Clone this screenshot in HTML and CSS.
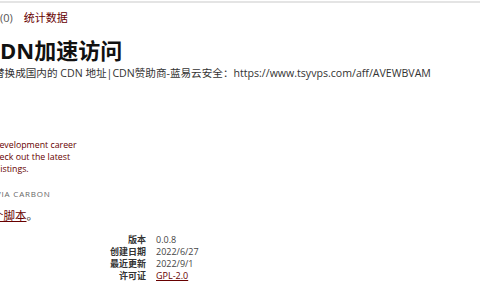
FILE: index.html
```html
<!DOCTYPE html>
<html lang="zh-CN">
<head>
<meta charset="utf-8">
<link rel="stylesheet" href="styles.css">
</head>
<body>
<div class="topbar"></div>
<div class="tabs"><span class="count">(0)</span><a class="tab" href="#">统计数据</a></div>
<div class="page">
  <h2 class="title">CDN加速访问</h2>
  <p class="desc">替换成国内的 CDN 地址|CDN赞助商-蓝易云安全：https://www.tsyvps.com/aff/AVEWBVAM</p>
  <div class="ad">
    <p class="ad-text"><span class="ad-line">development career</span><span class="ad-line ad-line-2">check out the latest</span><span class="ad-line ad-line-3">listings.</span></p>
    <p class="ad-via">VIA CARBON</p>
  </div>
  <p class="note"><a href="#">个脚本</a>。</p>
  <dl class="meta">
    <dt>版本</dt><dd>0.0.8</dd>
    <dt>创建日期</dt><dd>2022/6/27</dd>
    <dt>最近更新</dt><dd>2022/9/1</dd>
    <dt>许可证</dt><dd><a href="#">GPL-2.0</a></dd>
  </dl>
</div>
</body>
</html>
```
FILE: styles.css
```css
html, body {
  margin: 0;
  padding: 0;
  background: #fff;
  overflow: hidden;
  width: 480px;
  height: 300px;
}
body {
  font-family: "Open Sans", "Noto Sans CJK SC", sans-serif;
  color: #333;
}
.topbar {
  height: 2px;
  margin-top: 1px;
  background: #e4e4e4;
}
.tabs {
  display: flex;
  gap: 11px;
  font-size: 11px;
  line-height: 14px;
  padding-top: 8px;
  height: 22px;
}
.count { color: #555; }
.tab { color: #670000; text-decoration: none; }
.page {
  display: flex;
  flex-direction: column;
  align-items: flex-start;
}
.title {
  margin: 3px 0 0 -14px;
  font-size: 22px;
  line-height: 28px;
  font-weight: bold;
  color: #111;
}
.desc {
  margin: 1px 0 0 -6px;
  font-size: 10.6px;
  line-height: 16px;
  color: #333;
  white-space: nowrap;
}
.ad {
  margin: 58px 0 0 -6px;
}
.ad-text {
  margin: 0;
  font-size: 8.8px;
  line-height: 12px;
  color: #670000;
}
.ad-line { display: block; }
.ad-line-2 { margin-left: -4px; }
.ad-line-3 { margin-left: 4px; }
.ad-via {
  margin: 13px 0 0 2px;
  font-size: 8px;
  letter-spacing: 0.8px;
  line-height: 12px;
  color: #666;
}
.note {
  margin: 8px 0 0 -8px;
  font-size: 11.5px;
  line-height: 16px;
}
.note a { color: #670000; }
.meta {
  margin: 10px 0 0 0;
  display: grid;
  grid-template-columns: 146px auto;
  column-gap: 10px;
  font-size: 9px;
  line-height: 12px;
}
.meta dt {
  text-align: right;
  font-weight: bold;
  color: #333;
}
.meta dd {
  margin: 0;
  color: #444;
}
.meta a { color: #670000; }
```
